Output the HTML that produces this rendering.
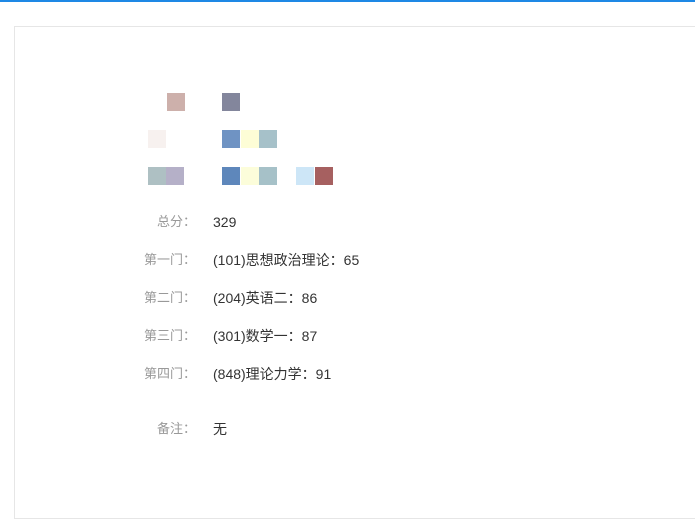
<!DOCTYPE html>
<html><head><meta charset="utf-8"><style>
html,body{margin:0;padding:0;width:695px;height:523px;background:#fff;overflow:hidden;position:relative;font-family:"Liberation Sans","Noto Sans CJK SC",sans-serif;font-size:13px}
.bar{position:absolute;left:0;top:0;width:695px;height:2px;background:#1e88e5}
.box{position:absolute;left:14px;top:26px;width:690px;height:491px;border:1px solid #e6e6e6}
.s{position:absolute;width:18px;height:18px}
.l{position:absolute;right:499px;color:#999;white-space:nowrap;line-height:16px}
.v{position:absolute;left:213px;color:#333;white-space:nowrap;line-height:16px;font-size:14px}
</style></head><body>
<div class="bar"></div>
<div class="box"></div>
<div class="s" style="left:167px;top:93px;background:#cdb0ab"></div>
<div class="s" style="left:222px;top:93px;background:#83869c"></div>
<div class="s" style="left:148px;top:130px;background:#f7f1ef"></div>
<div class="s" style="left:222px;top:130px;background:#6f93c3"></div>
<div class="s" style="left:241px;top:130px;background:#fdfdd6"></div>
<div class="s" style="left:259px;top:130px;background:#a6c1c9"></div>
<div class="s" style="left:148px;top:167px;background:#aec0c3"></div>
<div class="s" style="left:166px;top:167px;background:#b5b0c8"></div>
<div class="s" style="left:222px;top:167px;background:#5e87bb"></div>
<div class="s" style="left:241px;top:167px;background:#fcfdda"></div>
<div class="s" style="left:259px;top:167px;background:#a6c1c8"></div>
<div class="s" style="left:296px;top:167px;background:#cde6f7"></div>
<div class="s" style="left:315px;top:167px;background:#a66060"></div>
<div class="l" style="top:214px">总分：</div><div class="v" style="top:214px">329</div>
<div class="l" style="top:252px">第一门：</div><div class="v" style="top:252px">(101)思想政治理论：65</div>
<div class="l" style="top:290px">第二门：</div><div class="v" style="top:290px">(204)英语二：86</div>
<div class="l" style="top:328px">第三门：</div><div class="v" style="top:328px">(301)数学一：87</div>
<div class="l" style="top:366px">第四门：</div><div class="v" style="top:366px">(848)理论力学：91</div>
<div class="l" style="top:421px">备注：</div><div class="v" style="top:421px">无</div>
</body></html>
